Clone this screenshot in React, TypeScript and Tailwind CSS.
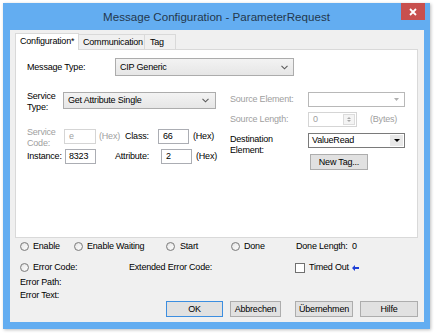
import React from "react";

const Chevron = () => (
  <svg width="7" height="5" viewBox="0 0 7 5" className="shrink-0">
    <path d="M0.5 0.8 L3.5 3.8 L6.5 0.8" fill="none" stroke="#5a5a5a" strokeWidth="1.1" />
  </svg>
);

const Radio = () => (
  <span className="w-[9px] h-[9px] rounded-full border border-[#7d7d7d] bg-linear-to-br from-[#e6e6e6] to-[#ffffff] shrink-0 shadow-[inset_0_0_1px_#bbb]" />
);

const WinButton = ({ w, label, def }: { w: string; label: string; def?: boolean }) => (
  <div
    className={`${w} h-[16px] flex items-center justify-center bg-[#e1e1e1] border ${
      def ? "border-[#3c8ee0]" : "border-[#adadad]"
    } text-black`}
  >
    {label}
  </div>
);

export default function App() {
  return (
    <div className="w-[434px] h-[333px] bg-white pt-[3px] pl-[3px] font-['Liberation_Sans',Arial,sans-serif] text-[9px] tracking-[-0.2px] text-black leading-none">
      <div className="w-[427px] h-[326px] bg-[#63adf1] flex flex-col shadow-[1px_1px_3px_rgba(0,0,0,0.25)]">
        {/* title bar */}
        <div className="relative h-[27px] flex items-center justify-center shrink-0">
          <span className="text-[11.6px] tracking-normal text-[#24384d] mt-[1px]">
            Message Configuration - ParameterRequest
          </span>
          <div className="absolute right-[5px] top-0 w-[24px] h-[17px] bg-[#c8504e] flex items-center justify-center">
            <svg width="8" height="8" viewBox="0 0 8 8">
              <path d="M1 1 L7 7 M7 1 L1 7" stroke="white" strokeWidth="1.8" />
            </svg>
          </div>
        </div>
        {/* client area */}
        <div className="ml-[7px] mr-[6px] h-[292px] bg-[#f0f0f0] flex flex-col">
          {/* tabs */}
          <div className="ml-[5px] mt-[3px] h-[16px] flex items-end relative z-10">
            <div className="h-[17px] mb-[-1px] w-[64px] bg-white border border-b-0 border-[#d9d9d9] flex items-center pl-[4px] pb-[1px]">
              Configuration*
            </div>
            <div className="h-[15px] w-[66px] bg-[#f0f0f0] border border-l-0 border-b-0 border-[#d9d9d9] flex items-center pl-[4px]">
              Communication
            </div>
            <div className="h-[15px] w-[31px] bg-[#f0f0f0] border border-l-0 border-b-0 border-[#d9d9d9] flex items-center pl-[5px]">
              Tag
            </div>
          </div>
          {/* panel */}
          <div className="ml-[5px] w-[403px] h-[189px] bg-white border border-[#d9d9d9] flex flex-col pl-[11px]">
            <div className="mt-[8px] h-[18px] flex items-center">
              <span className="w-[88px]">Message Type:</span>
              <div className="w-[179px] h-[18px] border border-[#acacac] bg-linear-to-b from-[#f3f3f3] to-[#e6e6e6] flex items-center justify-between pl-[4px] pr-[5px]">
                <span>CIP Generic</span>
                <Chevron />
              </div>
            </div>
            <div className="mt-[16px] flex">
              {/* left column */}
              <div className="w-[203px] flex flex-col">
                <div className="h-[17px] flex items-center">
                  <span className="w-[36px] leading-[11.5px] mt-[3px]">
                    Service
                    <br />
                    Type:
                  </span>
                  <div className="w-[153px] h-[17px] border border-[#acacac] bg-linear-to-b from-[#f3f3f3] to-[#e6e6e6] flex items-center justify-between pl-[4px] pr-[6px]">
                    <span>Get Attribute Single</span>
                    <Chevron />
                  </div>
                </div>
                <div className="mt-[20px] h-[15px] flex items-center">
                  <span className="w-[37px] leading-[11px] text-[#a0a0a0] mt-[3px]">
                    Service
                    <br />
                    Code:
                  </span>
                  <div className="w-[32px] h-[15px] border border-[#d5d5d5] bg-white flex items-center pl-[4px] text-[#a0a0a0]">
                    e
                  </div>
                  <span className="w-[29px] pl-[3px] text-[#a0a0a0]">(Hex)</span>
                  <span className="w-[33px]">Class:</span>
                  <div className="w-[31px] h-[15px] border border-[#abadb3] bg-white flex items-center pl-[4px]">
                    66
                  </div>
                  <span className="ml-[4px]">(Hex)</span>
                </div>
                <div className="mt-[5px] h-[15px] flex items-center">
                  <span className="w-[38px]">Instance:</span>
                  <div className="w-[31px] h-[15px] border border-[#abadb3] bg-white flex items-center pl-[3px]">
                    8323
                  </div>
                  <span className="ml-[19px] w-[46px]">Attribute:</span>
                  <div className="w-[31px] h-[15px] border border-[#abadb3] bg-white flex items-center pl-[4px]">
                    2
                  </div>
                  <span className="ml-[4px]">(Hex)</span>
                </div>
              </div>
              {/* right column */}
              <div className="flex flex-col">
                <div className="h-[15px] flex items-center">
                  <span className="w-[78px] text-[#a0a0a0]">Source Element:</span>
                  <div className="w-[97px] h-[15px] border border-[#b8b8b8] bg-white flex items-center justify-end pr-[1px]">
                    <div className="w-[13px] h-[11px] flex items-center justify-center">
                      <svg width="5" height="3" viewBox="0 0 5 3">
                        <path d="M0 0 L5 0 L2.5 3 Z" fill="#b0b0b0" />
                      </svg>
                    </div>
                  </div>
                </div>
                <div className="mt-[5px] h-[15px] flex items-center">
                  <span className="w-[78px] text-[#a0a0a0]">Source Length:</span>
                  <div className="w-[49px] h-[15px] border border-[#d5d5d5] bg-white flex items-center justify-between pl-[4px] pr-[1px] text-[#a0a0a0]">
                    <span>0</span>
                    <div className="w-[12px] h-[11px] border border-[#dcdcdc] bg-[#f4f4f4] flex flex-col items-center justify-center gap-[1px]">
                      <svg width="4" height="2" viewBox="0 0 4 2">
                        <path d="M0 2 L4 2 L2 0 Z" fill="#a8a8a8" />
                      </svg>
                      <svg width="4" height="2" viewBox="0 0 4 2">
                        <path d="M0 0 L4 0 L2 2 Z" fill="#a8a8a8" />
                      </svg>
                    </div>
                  </div>
                  <span className="ml-[13px] text-[#a0a0a0]">(Bytes)</span>
                </div>
                <div className="mt-[6px] h-[15px] flex items-start">
                  <span className="w-[78px] leading-[11px] mt-[1px]">
                    Destination
                    <br />
                    Element:
                  </span>
                  <div className="w-[97px] h-[15px] border border-[#7a7a7a] bg-white flex items-center justify-between pl-[3px] pr-[1px]">
                    <span>ValueRead</span>
                    <div className="w-[13px] h-[11px] bg-[#e8e8e8] flex items-center justify-center">
                      <svg width="6" height="3" viewBox="0 0 6 3">
                        <path d="M0 0 L6 0 L3 3 Z" fill="#000" />
                      </svg>
                    </div>
                  </div>
                </div>
                <div className="mt-[6px] ml-[80px]">
                  <WinButton w="w-[58px]" label="New Tag..." />
                </div>
              </div>
            </div>
          </div>
          {/* status area */}
          <div className="pl-[10px] flex flex-col">
            <div className="mt-[3px] h-[11px] flex items-center">
              <div className="w-[54px] flex items-center gap-[4px]">
                <Radio />
                <span>Enable</span>
              </div>
              <div className="w-[92px] flex items-center gap-[4px]">
                <Radio />
                <span>Enable Waiting</span>
              </div>
              <div className="w-[65px] flex items-center gap-[5px]">
                <Radio />
                <span>Start</span>
              </div>
              <div className="w-[65px] flex items-center gap-[4px]">
                <Radio />
                <span>Done</span>
              </div>
              <span className="w-[56px]">Done Length:</span>
              <span>0</span>
            </div>
            <div className="mt-[10px] h-[11px] flex items-center">
              <div className="w-[109px] flex items-center gap-[4px]">
                <Radio />
                <span>Error Code:</span>
              </div>
              <span className="w-[166px]">Extended Error Code:</span>
              <span className="w-[10px] h-[10px] border border-[#707070] bg-white shrink-0" />
              <span className="ml-[4px] w-[43px]">Timed Out</span>
              <svg width="7" height="6" viewBox="0 0 7 6">
                <path d="M0 3 L3 0 L3 2 L7 2 L7 4 L3 4 L3 6 Z" fill="#1f3fd6" />
              </svg>
            </div>
            <div className="mt-[3px] flex">
              <div className="w-[146px] flex flex-col">
                <span className="h-[13px] flex items-center">Error Path:</span>
                <span className="h-[13px] flex items-center">Error Text:</span>
              </div>
              <div className="mt-[25px] flex">
                <WinButton w="w-[57px]" label="OK" def />
                <div className="ml-[7px]">
                  <WinButton w="w-[51px]" label="Abbrechen" />
                </div>
                <div className="ml-[14px]">
                  <WinButton w="w-[58px]" label="Übernehmen" />
                </div>
                <div className="ml-[7px]">
                  <WinButton w="w-[58px]" label="Hilfe" />
                </div>
              </div>
            </div>
          </div>
        </div>
      </div>
    </div>
  );
}
